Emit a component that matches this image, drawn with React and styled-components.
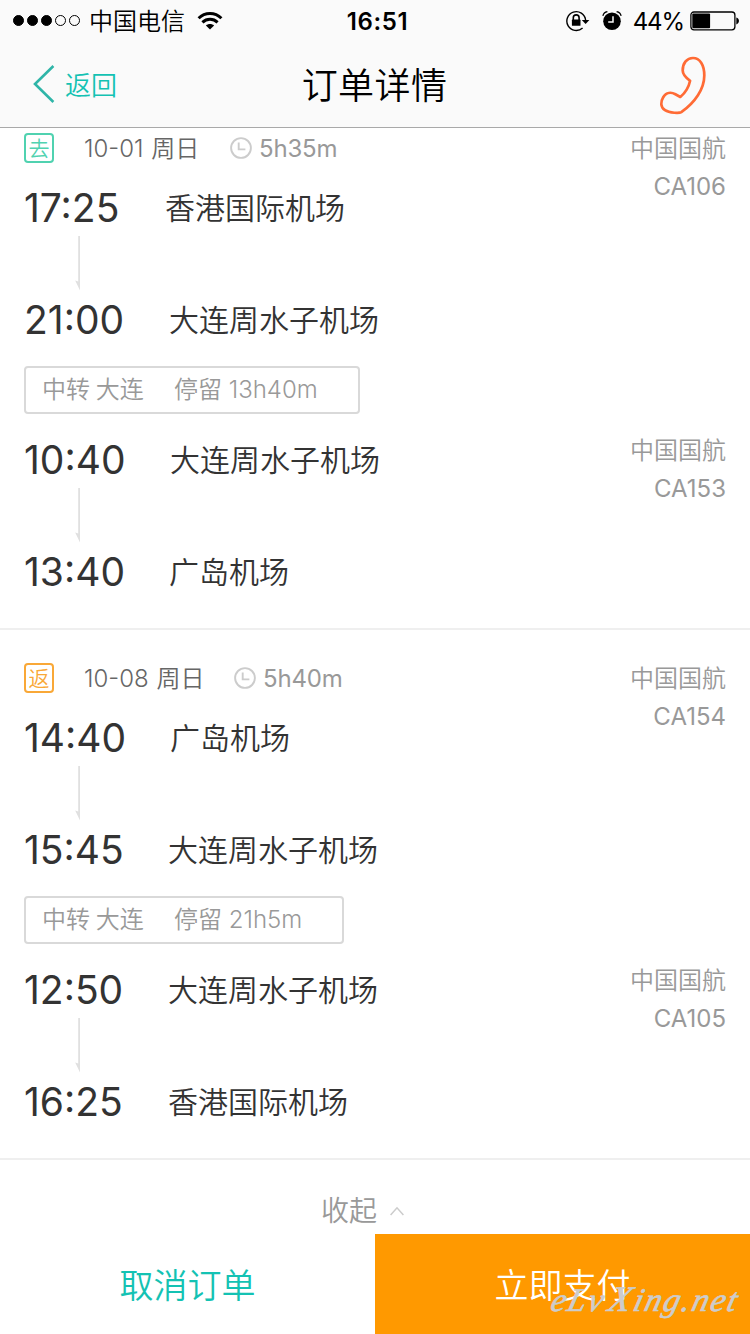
import React from "react";
import styled, { createGlobalStyle } from "styled-components";

const trips = [
    {
        tag: "去",
        color: "#50d2b0",
        date: "10-01 周日",
        dateWidth: 116,
        duration: "5h35m",
        stop: { city: "中转 大连", stay: "停留 13h40m", width: 336 },
        legs: [
            {
                airline: "中国国航",
                flight: "CA106",
                from: { time: "17:25", airport: "香港国际机场", timeWidth: 141 },
                to: { time: "21:00", airport: "大连周水子机场", timeWidth: 145 },
            },
            {
                airline: "中国国航",
                flight: "CA153",
                from: { time: "10:40", airport: "大连周水子机场", timeWidth: 146 },
                to: { time: "13:40", airport: "广岛机场", timeWidth: 145 },
            },
        ],
    },
    {
        tag: "返",
        color: "#f9a837",
        date: "10-08 周日",
        dateWidth: 120,
        duration: "5h40m",
        stop: { city: "中转 大连", stay: "停留 21h5m", width: 320 },
        legs: [
            {
                airline: "中国国航",
                flight: "CA154",
                from: { time: "14:40", airport: "广岛机场", timeWidth: 146 },
                to: { time: "15:45", airport: "大连周水子机场", timeWidth: 144 },
            },
            {
                airline: "中国国航",
                flight: "CA105",
                from: { time: "12:50", airport: "大连周水子机场", timeWidth: 144 },
                to: { time: "16:25", airport: "香港国际机场", timeWidth: 144 },
            },
        ],
    },
];

function WifiIcon() {
    return (
        <svg width="26" height="20" viewBox="0 0 26 20" fill="none" stroke="#000" strokeWidth="3">
            <path d="M1.6 7.2C8 .9 18 .9 24.4 7.2" />
            <path d="M5.4 11.3C9.8 7.2 16.2 7.2 20.6 11.3" />
            <path d="M13 18.6L8.9 14.6C11.2 12.6 14.8 12.6 17.1 14.6Z" fill="#000" stroke="none" />
        </svg>
    );
}

function LockIcon() {
    return (
        <svg width="24" height="22" viewBox="0 0 24 22" fill="none" stroke="#000" strokeWidth="1.4">
            <path d="M16.6 18A9.4 9.4 0 1 1 19.6 10" />
            <path d="M15.8 10H23.4L19.6 14Z" fill="#000" stroke="none" />
            <path d="M7.3 10V7.8a2.9 2.9 0 0 1 5.8 0V10" strokeWidth="1.6" />
            <rect x="5.9" y="9.6" width="8.6" height="6.2" rx=".6" fill="#000" stroke="none" />
        </svg>
    );
}

function AlarmIcon() {
    return (
        <svg width="20" height="20" viewBox="0 0 20 20" fill="none">
            <circle cx="10" cy="10.2" r="8.8" fill="#000" />
            <path d="M.9 4.8C1.4 2.6 3.2 1 5.4 .6M19.1 4.8C18.6 2.6 16.8 1 14.6 .6" stroke="#000" strokeWidth="1.3" />
            <path d="M11 5.2V11H6.2" stroke="#fafafa" strokeWidth="1.5" />
        </svg>
    );
}

function BatteryIcon() {
    return (
        <svg width="50" height="20" viewBox="0 0 50 20" fill="none">
            <rect x=".9" y="1" width="44" height="17.8" rx="3" stroke="#000" strokeWidth="1.3" />
            <rect x="2.3" y="2.6" width="17.8" height="14.6" rx="1" fill="#000" />
            <path d="M46.3 6.6C49.8 7.2 49.8 12.8 46.3 13.4Z" fill="#000" />
        </svg>
    );
}

function PhoneIcon() {
    return (
        <svg width="48" height="60" viewBox="0 0 48 60" fill="none" stroke="#ff6b35" strokeWidth="2.7" strokeLinejoin="round">
            <path d="M23.7 14.5C23.7 7 28 2 34 2C40.8 2 45.3 8.8 45.3 19.5C45.3 33 36 46.5 22.3 56.2C20.6 57.3 10.5 57.3 6 54.2C1.2 50.8 1.6 45.5 4.2 41.2C7.2 36.3 12.2 36 16.4 38.3L21.3 41C26.5 36.8 29.7 31.5 31.1 24.8C27 21.8 23.7 19 23.7 14.5Z" />
        </svg>
    );
}

function ClockIcon() {
    return (
        <svg width="22" height="22" viewBox="0 0 22 22" fill="none" stroke="#ccc" strokeWidth="1.9">
            <circle cx="11" cy="11" r="9.9" />
            <path d="M8.7 5.4V12.4H15.4" />
        </svg>
    );
}

function Arrow() {
    return (
        <ArrowBox>
            <svg width="6" height="56" viewBox="0 0 6 56">
                <path d="M3.2 -.5H5V54.5L.2 44.5L3.2 45.6Z" fill="#e0e0e0" />
            </svg>
        </ArrowBox>
    );
}

function Stop({ time, airport, timeWidth }) {
    return (
        <StopRow>
            <Time $width={timeWidth}>{time}</Time>
            <Airport>{airport}</Airport>
        </StopRow>
    );
}

function Leg({ leg, airlineTop, children }) {
    return (
        <LegRow>
            <div>
                {children}
                <Stop {...leg.from} />
                <Arrow />
                <Stop {...leg.to} />
            </div>
            <Airline $top={airlineTop}>
                <span>{leg.airline}</span>
                <FlightNo>{leg.flight}</FlightNo>
            </Airline>
        </LegRow>
    );
}

export default function App() {
    return (
        <Page>
            <GlobalStyle />
            <Header>
                <StatusBar>
                    <StatusLeft>
                        <Signal>
                            <Dot $full />
                            <Dot $full />
                            <Dot $full />
                            <Dot />
                            <Dot />
                        </Signal>
                        <Carrier>中国电信</Carrier>
                        <WifiIcon />
                    </StatusLeft>
                    <Clock>16:51</Clock>
                    <StatusRight>
                        <LockIcon />
                        <AlarmIcon />
                        <Percent>44%</Percent>
                        <BatteryIcon />
                    </StatusRight>
                </StatusBar>
                <NavBar>
                    <Back>
                        <svg width="22" height="38" viewBox="0 0 22 38" fill="none" stroke="#2fb5a8" strokeWidth="2.6">
                            <path d="M20.4 1L2 19L20.4 37" />
                        </svg>
                        <BackText>返回</BackText>
                    </Back>
                    <Title>订单详情</Title>
                    <Call>
                        <PhoneIcon />
                    </Call>
                </NavBar>
            </Header>

            <Content>
                <TripList>
                    {trips.map((trip) => (
                        <Trip key={trip.tag}>
                            <Leg leg={trip.legs[0]} airlineTop={2}>
                                <DateRow>
                                    <Tag $color={trip.color}>{trip.tag}</Tag>
                                    <TripDate $width={trip.dateWidth}>{trip.date}</TripDate>
                                    <ClockIcon />
                                    <Duration>{trip.duration}</Duration>
                                </DateRow>
                            </Leg>
                            <Transfer $width={trip.stop.width}>
                                <TransferCity>{trip.stop.city}</TransferCity>
                                <span>{trip.stop.stay}</span>
                            </Transfer>
                            <Leg leg={trip.legs[1]} airlineTop={0} />
                        </Trip>
                    ))}
                </TripList>
                <Collapse>
                    <span>收起</span>
                    <svg width="14" height="10" viewBox="0 0 14 10" fill="none" stroke="#ccc" strokeWidth="1.5">
                        <path d="M.6 9L7 1.8L13.4 9" />
                    </svg>
                </Collapse>
            </Content>

            <Footer>
                <CancelButton>取消订单</CancelButton>
                <PayButton>立即支付</PayButton>
            </Footer>
            <Watermark>
                eLv<Swash>X</Swash>ing.net
            </Watermark>
        </Page>
    );
}

const GlobalStyle = createGlobalStyle`
    * {
        box-sizing: border-box;
    }

    body {
        margin: 0;
        background: #fff;
        font-family: Inter, "Noto Sans CJK SC", sans-serif;
        font-weight: 350;
    }

    svg {
        display: block;
        flex-shrink: 0;
    }
`;

const Page = styled.div`
    position: relative;
    display: flex;
    flex-direction: column;
    width: 750px;
    height: 1334px;
    overflow: hidden;
    background: #fff;
`;

const Header = styled.header`
    height: 128px;
    flex-shrink: 0;
    background: #fafafa;
    border-bottom: 1px solid #a9a9a9;
    color: #000;
`;

const StatusBar = styled.div`
    display: grid;
    grid-template-columns: 1fr auto 1fr;
    align-items: center;
    height: 41px;
    padding: 0 10px 0 13px;
`;

const StatusLeft = styled.div`
    display: flex;
    align-items: center;
`;

const Signal = styled.div`
    display: flex;
    gap: 3px;
    margin-right: 9px;
`;

const Dot = styled.span`
    width: 11px;
    height: 11px;
    border: 1px solid #000;
    border-radius: 50%;
    background: ${props => props.$full ? "#000" : "transparent"};
`;

const Carrier = styled.span`
    margin-right: 12px;
    padding-top: 2px;
    font-size: 24px;
    line-height: 39px;
`;

const Clock = styled.span`
    padding: 2px 0 0 2px;
    font-size: 24px;
    font-weight: 600;
    letter-spacing: 0.6px;
    line-height: 39px;
`;

const StatusRight = styled.div`
    display: flex;
    align-items: center;
    justify-content: flex-end;
    gap: 12px;
`;

const Percent = styled.span`
    margin: 0 -6px 0 -1px;
    padding-top: 2px;
    font-size: 24px;
    font-weight: 400;
    letter-spacing: -1.1px;
    line-height: 39px;
`;

const NavBar = styled.nav`
    display: grid;
    grid-template-columns: 1fr auto 1fr;
    align-items: center;
    height: 86px;
    padding: 0 43px 0 33px;
`;

const Back = styled.div`
    display: flex;
    align-items: center;
    gap: 10px;
    color: #14c2b3;
    font-size: 26px;
`;

const BackText = styled.span`
    padding-bottom: 2px;
`;

const Title = styled.h1`
    margin: 0;
    padding: 4px 0 0 9px;
    font-size: 36px;
    font-weight: 350;
    letter-spacing: 0.4px;
    line-height: 82px;
`;

const Call = styled.div`
    display: flex;
    justify-content: flex-end;
    padding-top: 3px;
`;

const Content = styled.main`
    flex: 1;
    min-height: 0;
    overflow: hidden;
`;

// the list is scrolled a little under the header
const TripList = styled.div`
    margin-top: -28px;
`;

const Trip = styled.section`
    height: 530px;
    padding: 28px 24px;
    border-bottom: 2px solid #efefef;
`;

const LegRow = styled.div`
    display: flex;
    justify-content: space-between;
`;

const DateRow = styled.div`
    display: flex;
    align-items: center;
    height: 40px;
    margin-bottom: 12px;
    font-size: 24px;
`;

const Tag = styled.span`
    width: 30px;
    height: 30px;
    margin-right: 30px;
    border: 2px solid ${props => props.$color};
    border-radius: 4px;
    color: ${props => props.$color};
    font-size: 21px;
    line-height: 28px;
    text-align: center;
`;

const TripDate = styled.span`
    width: ${props => props.$width}px;
    margin-right: 30px;
    padding-bottom: 3px;
    color: #666;
    white-space: nowrap;
    word-spacing: 1px;
`;

const Duration = styled.span`
    margin-left: 7px;
    color: #999;
    font-weight: 400;
    letter-spacing: -0.2px;
`;

const StopRow = styled.div`
    display: flex;
    align-items: center;
    height: 56px;
    padding-bottom: 2px;
`;

const Time = styled.span`
    width: ${props => props.$width}px;
    color: #333;
    font-size: 39px;
    font-weight: 400;
`;

const Airport = styled.span`
    padding-bottom: 3px;
    color: #333;
    font-size: 30px;
`;

const ArrowBox = styled.div`
    height: 56px;
    padding-left: 51px;
`;

const Airline = styled.div`
    display: flex;
    flex-direction: column;
    padding-top: ${props => props.$top}px;
    color: #999;
    font-size: 24px;
    line-height: 38px;
    text-align: right;
`;

const FlightNo = styled.span`
    font-weight: 400;
`;

const Transfer = styled.div`
    display: flex;
    align-items: center;
    width: ${props => props.$width}px;
    height: 48px;
    margin: 18px 0;
    padding: 0 0 5px 16px;
    border: 2px solid #d9d9d9;
    border-radius: 4px;
    color: #999;
    font-size: 24px;
    white-space: nowrap;
`;

const TransferCity = styled.span`
    width: 132px;
    word-spacing: -1px;
`;

const Collapse = styled.div`
    display: flex;
    align-items: center;
    justify-content: center;
    gap: 13px;
    height: 74px;
    padding-top: 27px;
    padding-right: 25px;
    color: #999;
    font-size: 28px;

    span {
        padding-bottom: 3px;
    }
`;

const Footer = styled.footer`
    display: flex;
    flex-shrink: 0;
    height: 100px;
`;

const Button = styled.button`
    flex: 1;
    border: none;
    padding: 0 0 2px;
    font-family: inherit;
    font-size: 34px;
    font-weight: 350;
`;

const CancelButton = styled(Button)`
    background: #fff;
    color: #14c2b3;
`;

const PayButton = styled(Button)`
    background: #ff9900;
    color: #fff;
`;

const Watermark = styled.span`
    position: absolute;
    right: 11px;
    bottom: 14px;
    color: #ccc;
    font-family: "Liberation Serif", serif;
    font-size: 33px;
    font-style: italic;
    font-weight: 400;
    letter-spacing: 2px;
    line-height: 40px;
    transform: skewX(-14deg);
    -webkit-text-stroke: 0.7px #ccc;
`;

const Swash = styled.span`
    margin: 0 1px 0 4px;
    font-size: 36px;
`;
